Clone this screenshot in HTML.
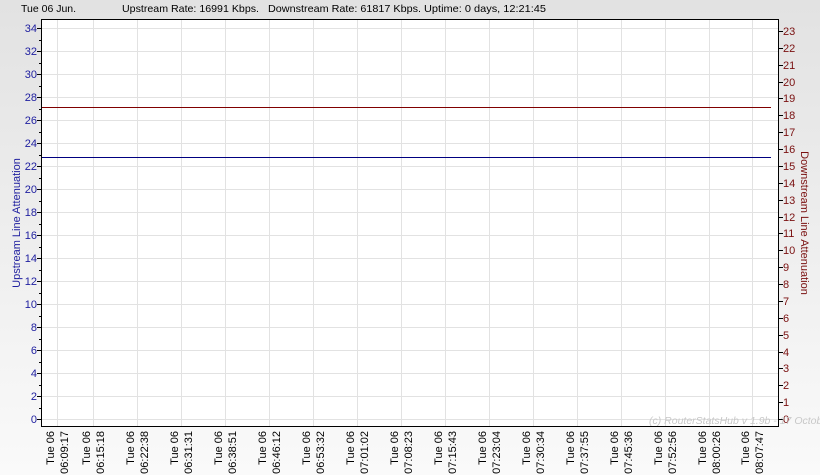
<!DOCTYPE html>
<html><head><meta charset="utf-8"><style>
html,body{margin:0;padding:0;width:820px;height:475px;overflow:hidden;background:#fff;}
svg{display:block;font-family:"Liberation Sans",Arial,sans-serif;}
</style></head><body>
<svg width="820" height="475" xmlns="http://www.w3.org/2000/svg">
<defs><linearGradient id="bg" x1="0" y1="0" x2="0" y2="1"><stop offset="0" stop-color="#e2e2e2"/><stop offset="1" stop-color="#fafafa"/></linearGradient></defs>
<rect width="820" height="475" fill="url(#bg)"/>
<g font-size="10.5" fill="#000">
<text x="21" y="12">Tue 06 Jun.</text>
<text x="122" y="12" textLength="137" lengthAdjust="spacingAndGlyphs">Upstream Rate: 16991 Kbps.</text>
<text x="268" y="12" textLength="153" lengthAdjust="spacingAndGlyphs">Downstream Rate: 61817 Kbps.</text>
<text x="424" y="12" textLength="122" lengthAdjust="spacingAndGlyphs">Uptime: 0 days, 12:21:45</text>
</g>
<rect x="41" y="19" width="738" height="408" fill="#fff"/>
<path stroke="#e2e2e2" stroke-width="1" fill="none" d="M41 28.5H779M41 51.5H779M41 74.5H779M41 97.5H779M41 120.5H779M41 143.5H779M41 166.5H779M41 189.5H779M41 212.5H779M41 235.5H779M41 258.5H779M41 281.5H779M41 304.5H779M41 327.5H779M41 350.5H779M41 373.5H779M41 396.5H779M41 419.5H779
M57.5 19V427M93.5 19V427M137.5 19V427M181.5 19V427M225.5 19V427M269.5 19V427M313.5 19V427M357.5 19V427M401.5 19V427M445.5 19V427M489.5 19V427M533.5 19V427M577.5 19V427M621.5 19V427M665.5 19V427M709.5 19V427M752.5 19V427"/>
<path stroke="#000" stroke-width="1" fill="none" d="M37 28.5H41M37 51.5H41M37 74.5H41M37 97.5H41M37 120.5H41M37 143.5H41M37 166.5H41M37 189.5H41M37 212.5H41M37 235.5H41M37 258.5H41M37 281.5H41M37 304.5H41M37 327.5H41M37 350.5H41M37 373.5H41M37 396.5H41M37 419.5H41
M39 40.5H41M39 63.5H41M39 86.5H41M39 109.5H41M39 132.5H41M39 155.5H41M39 178.5H41M39 201.5H41M39 224.5H41M39 247.5H41M39 270.5H41M39 293.5H41M39 316.5H41M39 339.5H41M39 362.5H41M39 385.5H41M39 408.5H41
M779 419.5H783M779 402.5H783M779 385.5H783M779 368.5H783M779 352.5H783M779 335.5H783M779 318.5H783M779 301.5H783M779 284.5H783M779 267.5H783M779 250.5H783M779 233.5H783M779 217.5H783M779 200.5H783M779 183.5H783M779 166.5H783M779 149.5H783M779 132.5H783M779 115.5H783M779 98.5H783M779 82.5H783M779 65.5H783M779 48.5H783M779 31.5H783"/>
<g font-size="11" fill="#2020a0" text-anchor="end">
<text x="37" y="423">0</text><text x="37" y="400">2</text><text x="37" y="377">4</text><text x="37" y="354">6</text><text x="37" y="331">8</text><text x="37" y="308">10</text><text x="37" y="285">12</text><text x="37" y="262">14</text><text x="37" y="239">16</text><text x="37" y="216">18</text><text x="37" y="193">20</text><text x="37" y="170">22</text><text x="37" y="147">24</text><text x="37" y="124">26</text><text x="37" y="101">28</text><text x="37" y="78">30</text><text x="37" y="55">32</text><text x="37" y="32">34</text>
</g>
<g font-size="11" fill="#7a1010">
<text x="783" y="423">0</text><text x="783" y="406">1</text><text x="783" y="389">2</text><text x="783" y="372">3</text><text x="783" y="356">4</text><text x="783" y="339">5</text><text x="783" y="322">6</text><text x="783" y="305">7</text><text x="783" y="288">8</text><text x="783" y="271">9</text><text x="783" y="254">10</text><text x="783" y="237">11</text><text x="783" y="221">12</text><text x="783" y="204">13</text><text x="783" y="187">14</text><text x="783" y="170">15</text><text x="783" y="153">16</text><text x="783" y="136">17</text><text x="783" y="119">18</text><text x="783" y="102">19</text><text x="783" y="86">20</text><text x="783" y="69">21</text><text x="783" y="52">22</text><text x="783" y="35">23</text>
</g>
<g font-size="11" fill="#000" text-anchor="end">
<text transform="translate(54,431) rotate(-90)">Tue 06</text><text transform="translate(68,431) rotate(-90)">06:09:17</text>
<text transform="translate(90,431) rotate(-90)">Tue 06</text><text transform="translate(104,431) rotate(-90)">06:15:18</text>
<text transform="translate(134,431) rotate(-90)">Tue 06</text><text transform="translate(148,431) rotate(-90)">06:22:38</text>
<text transform="translate(178,431) rotate(-90)">Tue 06</text><text transform="translate(192,431) rotate(-90)">06:31:31</text>
<text transform="translate(222,431) rotate(-90)">Tue 06</text><text transform="translate(236,431) rotate(-90)">06:38:51</text>
<text transform="translate(266,431) rotate(-90)">Tue 06</text><text transform="translate(280,431) rotate(-90)">06:46:12</text>
<text transform="translate(310,431) rotate(-90)">Tue 06</text><text transform="translate(324,431) rotate(-90)">06:53:32</text>
<text transform="translate(354,431) rotate(-90)">Tue 06</text><text transform="translate(368,431) rotate(-90)">07:01:02</text>
<text transform="translate(398,431) rotate(-90)">Tue 06</text><text transform="translate(412,431) rotate(-90)">07:08:23</text>
<text transform="translate(442,431) rotate(-90)">Tue 06</text><text transform="translate(456,431) rotate(-90)">07:15:43</text>
<text transform="translate(486,431) rotate(-90)">Tue 06</text><text transform="translate(500,431) rotate(-90)">07:23:04</text>
<text transform="translate(530,431) rotate(-90)">Tue 06</text><text transform="translate(544,431) rotate(-90)">07:30:34</text>
<text transform="translate(574,431) rotate(-90)">Tue 06</text><text transform="translate(588,431) rotate(-90)">07:37:55</text>
<text transform="translate(618,431) rotate(-90)">Tue 06</text><text transform="translate(632,431) rotate(-90)">07:45:36</text>
<text transform="translate(662,431) rotate(-90)">Tue 06</text><text transform="translate(676,431) rotate(-90)">07:52:56</text>
<text transform="translate(706,431) rotate(-90)">Tue 06</text><text transform="translate(720,431) rotate(-90)">08:00:26</text>
<text transform="translate(749,431) rotate(-90)">Tue 06</text><text transform="translate(763,431) rotate(-90)">08:07:47</text>
</g>
<line x1="41" x2="771" y1="107.5" y2="107.5" stroke="#800000" stroke-width="1"/>
<line x1="41" x2="771" y1="157.5" y2="157.5" stroke="#000080" stroke-width="1"/>
<text x="649" y="424" font-size="10.5" font-style="italic" fill="#c8c8c8">(c) RouterStatsHub v 1.9b - 17 October 2</text>
<path stroke="#000" stroke-width="1" fill="none" d="M41.5 19V427M778.5 19V427M41 19.5H779M41 426.5H779"/>
<text transform="translate(20,223) rotate(-90)" text-anchor="middle" font-size="11" fill="#2020a0">Upstream Line Attenuation</text>
<text transform="translate(801,223) rotate(90)" text-anchor="middle" font-size="11" fill="#7a1010">Downstream Line Attenuation</text>
</svg>
</body></html>
